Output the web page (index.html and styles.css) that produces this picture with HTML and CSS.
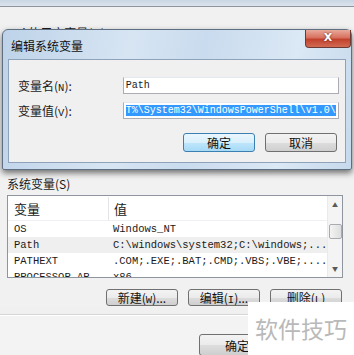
FILE: index.html
```html
<!DOCTYPE html>
<html lang="zh-CN">
<head>
  <meta charset="UTF-8">
  <title>编辑系统变量</title>
  <link rel="stylesheet" href="styles.css">
</head>
<body>
<div class="win">
  <div class="win-top"></div>
  <div class="win-body">
    <div class="user-label">Lai 的用户变量(U)</div>
    <div class="user-area"></div>

    <div class="sys-label">系统变量(S)</div>
    <div class="listbox">
      <div class="list-main">
        <div class="list-head">
          <div class="col-name">变量</div>
          <div class="col-val">值</div>
        </div>
        <div class="list-row">
          <div class="col-name mono">OS</div>
          <div class="col-val mono">Windows_NT</div>
        </div>
        <div class="list-row hover">
          <div class="col-name mono">Path</div>
          <div class="col-val mono">C:\windows\system32;C:\windows;...</div>
        </div>
        <div class="list-row">
          <div class="col-name mono">PATHEXT</div>
          <div class="col-val mono">.COM;.EXE;.BAT;.CMD;.VBS;.VBE;....</div>
        </div>
        <div class="list-row">
          <div class="col-name mono">PROCESSOR_AR</div>
          <div class="col-val mono">x86</div>
        </div>
      </div>
      <div class="scrollbar">
        <div class="arrow">&#9650;</div>
        <div class="thumb"></div>
        <div class="track"></div>
        <div class="arrow">&#9660;</div>
      </div>
    </div>

    <div class="btn-row">
      <button class="btn wide">新建(<span class="mono">W</span>)...</button>
      <button class="btn wide">编辑(<span class="mono">I</span>)...</button>
      <button class="btn wide">删除(<span class="mono">L</span>)</button>
    </div>
  </div>
  <div class="win-foot">
    <button class="btn foot-btn">确定</button>
  </div>
</div>

<!-- dialog floating above the environment window -->
<div class="dialog">
  <div class="dlg-title">
    <span>编辑系统变量</span>
    <div class="close">X</div>
  </div>
  <div class="dlg-panel">
    <div class="field">
      <label>变量名(<span class="mono">N</span>):</label>
      <div class="input mono">Path</div>
    </div>
    <div class="field">
      <label>变量值(<span class="mono">V</span>):</label>
      <div class="input mono"><span class="sel">T%\System32\WindowsPowerShell\v1.0\</span></div>
    </div>
    <div class="dlg-buttons">
      <button class="btn focus">确定</button>
      <button class="btn">取消</button>
    </div>
  </div>
</div>

<div class="watermark">软件技巧</div>
</body>
</html>
```

FILE: styles.css
```css
body {
  margin: 0;
  width: 354px;
  height: 355px;
  overflow: hidden;
  background: #f0f0f0;
  font-family: "Noto Sans CJK SC", sans-serif;
  font-size: 12px;
  color: #1a1a1a;
  position: relative;
}

.mono {
  font-family: "Liberation Mono", monospace;
  font-size: 10.5px;
}

.win-top {
  height: 6px;
  background: linear-gradient(#c9d6e3, #dbe4ee);
  border-bottom: 1px solid #8d96a0;
}

.win-body {
  padding: 0 11px 0 7px;
  background: #f1f1f1;
}

.user-label {
  padding-top: 18px;
  padding-left: 2px;
  height: 12px;
  line-height: 16px;
}

.user-area {
  height: 139px;
}

.sys-label {
  height: 16px;
  line-height: 16px;
}

.listbox {
  margin-top: 3px;
  height: 81px;
  border: 1px solid #8e959e;
  background: #fff;
  display: flex;
  overflow: hidden;
}

.list-main {
  flex: 1;
  padding-top: 1px;
}

.list-head {
  display: flex;
  height: 23px;
  line-height: 23px;
  font-size: 13px;
  border-bottom: 1px solid #eef0f3;
}

.list-head .col-val {
  border-left: 1px solid #e2e4e8;
}

.list-row {
  display: flex;
  height: 16px;
  line-height: 16px;
}

.list-row.hover {
  background: #efefef;
}

.col-name {
  width: 94px;
  padding-left: 6px;
}

.col-val {
  flex: 1;
  padding-left: 5px;
  white-space: nowrap;
}

.scrollbar {
  width: 17px;
  background: #f4f4f4;
  border-left: 1px solid #eaeaea;
  display: flex;
  flex-direction: column;
  align-items: center;
}

.arrow {
  font-size: 6px;
  color: #5a5a5a;
  height: 17px;
  line-height: 17px;
}

.thumb {
  margin-top: 11px;
  width: 13px;
  height: 15px;
  border: 1px solid #a8abb0;
  border-radius: 2px;
  background: linear-gradient(90deg, #f4f4f4, #dedede);
  box-sizing: border-box;
}

.track {
  flex: 1;
}

.btn {
  font-family: "Noto Sans CJK SC", sans-serif;
  font-size: 12px;
  color: #111;
  height: 17px;
  padding: 0;
  line-height: 15px;
  border: 1px solid #707070;
  border-radius: 3px;
  background: linear-gradient(#f3f3f3 0%, #ebebeb 50%, #dddddd 51%, #cfcfcf 100%);
}

.btn-row {
  display: flex;
  justify-content: flex-end;
  gap: 10px;
  padding-top: 11px;
  padding-right: 1px;
  height: 18px;
}

.btn.wide {
  width: 72px;
}

.win-foot {
  margin-top: 7px;
  border-top: 1px solid #d6d6d6;
  box-shadow: inset 0 1px 0 #fff;
  height: 42px;
  padding-left: 199px;
  padding-top: 19px;
  box-sizing: border-box;
  background: #f3f3f3;
}

.foot-btn {
  width: 76px;
  height: 22px;
}

/* floating dialog */
.dialog {
  position: absolute;
  left: 2px;
  top: 29px;
  width: 350px;
  height: 141px;
  box-sizing: border-box;
  border: 1px solid #5f6f82;
  border-radius: 6px 6px 2px 2px;
  background: linear-gradient(100deg, #bed3e9 0%, #d7e5f3 35%, #c9dbee 55%, #dbe8f5 80%, #c6d9ec 100%);
  box-shadow: 0 3px 6px rgba(0, 0, 0, 0.55);
  padding: 0 5px 6px 5px;
}

.dlg-title {
  height: 29px;
  display: flex;
  justify-content: space-between;
  align-items: flex-start;
}

.dlg-title span {
  padding-left: 3px;
  padding-top: 7px;
  font-size: 12px;
  color: #111;
}

.close {
  width: 44px;
  height: 17px;
  margin-right: -5px;
  border: 1px solid #6b3a34;
  border-top: none;
  border-radius: 0 0 4px 4px;
  background: linear-gradient(#e9a99b 0%, #d7715f 45%, #c2412c 55%, #d16a52 100%);
  color: #fff;
  font-family: "DejaVu Sans", sans-serif;
  font-weight: bold;
  font-size: 11px;
  text-align: center;
  line-height: 16px;
  text-shadow: 0 0 2px #5a1a10;
}

.dlg-panel {
  height: 104px;
  box-sizing: border-box;
  border: 1px solid #8ea3ba;
  background: #f0f0f0;
  padding: 17px 6px 0 9px;
}

.field {
  display: flex;
  align-items: center;
  height: 17px;
  margin-bottom: 8px;
}

.field label {
  width: 105px;
}

.input {
  width: 217px;
  height: 17px;
  line-height: 15px;
  box-sizing: border-box;
  border: 1px solid #abadb3;
  border-top-color: #e3e9ef;
  background: #fff;
  padding-left: 2px;
  white-space: nowrap;
  overflow: hidden;
}

.input.mono {
  font-size: 10px;
}

.sel {
  background: #3399ff;
  color: #fff;
}

.dlg-buttons {
  display: flex;
  justify-content: flex-end;
  gap: 10px;
  padding-top: 6px;
  padding-right: 2px;
}

.dlg-buttons .btn {
  width: 72px;
  height: 19px;
}

.btn.focus {
  border-color: #3c7fb1;
  background: linear-gradient(#eaf6fd 0%, #d9f0fc 50%, #bee6fd 51%, #a7d9f5 100%);
}

.watermark {
  position: absolute;
  left: 248px;
  top: 302px;
  width: 106px;
  height: 53px;
  background: #fff;
  color: #b9b9b9;
  font-size: 23px;
  line-height: 53px;
  text-align: center;
}
```
